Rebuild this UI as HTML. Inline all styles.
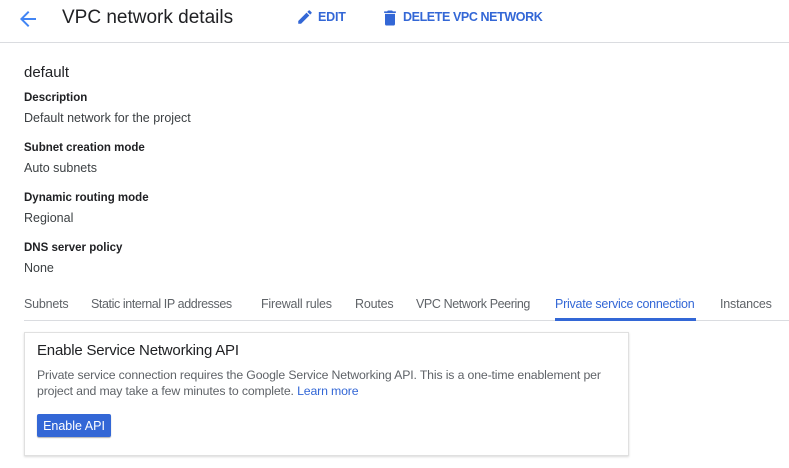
<!DOCTYPE html>
<html><head><style>
body{margin:0;width:789px;height:468px;background:#fff;font-family:"Liberation Sans",sans-serif;color:#202124;position:relative;overflow:hidden}
.a{position:absolute;white-space:nowrap;line-height:1}
.lab{font-size:11.5px;font-weight:bold;color:#202124}
.val{font-size:12.5px;color:#3c4043}
.tab{font-size:12.5px;color:#5f6368;top:298px;letter-spacing:-0.2px}
.blue{color:#3367d6}
</style></head><body>
<svg class="a" style="left:16px;top:7px" width="24" height="24" viewBox="0 0 24 24"><path d="M20 11H7.8l5.6-5.6L12 4l-8 8 8 8 1.4-1.4L7.8 13H20z" fill="#4285f4"/></svg>
<div class="a" style="left:62px;top:8px;font-size:19px;color:#202124">VPC network details</div>
<svg class="a" style="left:296px;top:8px" width="18" height="18" viewBox="0 0 24 24"><path d="M3 17.25V21h3.75L17.8 9.94l-3.75-3.75zM20.7 7.04a1 1 0 000-1.41l-2.34-2.34a1 1 0 00-1.41 0l-1.83 1.83 3.75 3.75z" fill="#3367d6"/></svg>
<div class="a blue" style="left:318px;top:11px;font-size:12.5px;font-weight:bold;letter-spacing:-0.2px">EDIT</div>
<svg class="a" style="left:380px;top:7px" width="20" height="22" viewBox="0 0 24 24"><path d="M6 19a2 2 0 002 2h8a2 2 0 002-2V7H6zM19 4h-3.5l-1-1h-5l-1 1H5v2h14z" fill="#3367d6"/></svg>
<div class="a blue" style="left:403px;top:11px;font-size:12.5px;font-weight:bold;letter-spacing:-0.4px">DELETE VPC NETWORK</div>
<div class="a" style="left:0;top:42px;width:789px;height:1px;background:#dadce0"></div>
<div class="a" style="left:24px;top:65px;font-size:15px">default</div>
<div class="a lab" style="left:24px;top:93px">Description</div>
<div class="a val" style="left:24px;top:112px">Default network for the project</div>
<div class="a lab" style="left:24px;top:143px">Subnet creation mode</div>
<div class="a val" style="left:24px;top:162px">Auto subnets</div>
<div class="a lab" style="left:24px;top:193px">Dynamic routing mode</div>
<div class="a val" style="left:24px;top:212px">Regional</div>
<div class="a lab" style="left:24px;top:243px">DNS server policy</div>
<div class="a val" style="left:24px;top:262px">None</div>
<div class="a tab" style="left:24px">Subnets</div>
<div class="a tab" style="left:91px;letter-spacing:-0.4px">Static internal IP addresses</div>
<div class="a tab" style="left:261px">Firewall rules</div>
<div class="a tab" style="left:355px">Routes</div>
<div class="a tab" style="left:416px;letter-spacing:-0.4px">VPC Network Peering</div>
<div class="a tab blue" style="left:555px;letter-spacing:-0.25px">Private service connection</div>
<div class="a tab" style="left:720px">Instances</div>
<div class="a" style="left:24px;top:320px;width:765px;height:1px;background:#dadce0"></div>
<div class="a" style="left:555px;top:318px;width:141px;height:3px;background:#3367d6"></div>
<div class="a" style="left:24px;top:332px;width:603px;height:122px;border:1px solid #e0e0e0;box-shadow:0 1px 2px rgba(0,0,0,.15)"></div>
<div class="a" style="left:37px;top:343px;font-size:15px;color:#202124;letter-spacing:-0.2px">Enable Service Networking API</div>
<div class="a" style="left:37px;top:369px;font-size:12.3px;color:#5f6368;letter-spacing:-0.15px">Private service connection requires the Google Service Networking API. This is a one-time enablement per</div>
<div class="a" style="left:37px;top:385px;font-size:12.3px;color:#5f6368;letter-spacing:-0.15px">project and may take a few minutes to complete. <span class="blue">Learn more</span></div>
<div class="a" style="left:37px;top:414px;width:74px;height:23px;background:#3367d6;border-radius:2px;box-shadow:0 1px 1px rgba(0,0,0,.3)"></div>
<div class="a" style="left:37px;top:420px;width:74px;text-align:center;font-size:12.5px;color:#fff">Enable API</div>
</body></html>
